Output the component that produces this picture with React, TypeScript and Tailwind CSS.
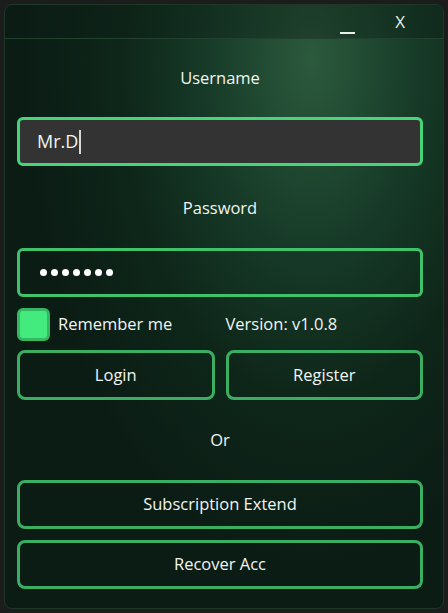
import { useState } from "react";

const font = { fontFamily: '"Open Sans", "Noto Sans", sans-serif' };

export default function App() {
  const [username, setUsername] = useState("Mr.D");
  const [remember, setRemember] = useState(true);

  return (
    <div className="w-[448px] h-[613px] bg-[#1b1d1c] p-1" style={font}>
      <div className="h-[605px] rounded-lg border border-[#1f3628] overflow-hidden bg-[radial-gradient(ellipse_at_70%_9%,#2c5a3d_0%,#173b28_24%,#0e2619_44%,#0b1c15_66%)] text-[#f1f5f2] text-[16.5px] flex flex-col">
        {/* Title bar */}
        <div className="h-[34px] shrink-0 border-b border-[#24402f] bg-[#0d1f16]/40 flex items-center justify-end pr-[38px]">
          <button className="w-[30px] h-[30px] flex items-end justify-center pb-[3px] mr-[33px]">
            <span className="block w-[15px] h-[1.5px] bg-[#e8efe9]" />
          </button>
          <button className="text-[17px] leading-none text-[#e8efe9]">X</button>
        </div>

        <div className="pl-[12px] pr-[20px] flex flex-col">
          <div className="text-center leading-[22px] mt-[28px]">Username</div>

          <div className="mt-[28px] h-[49px] rounded-md border-[3px] border-[#48d57a] bg-[#333333] flex items-center px-[17px]">
            <span className="text-[18px]">{username}</span>
            <span className="w-[2px] h-[24px] bg-[#d8d8d8] ml-[1px]" />
          </div>

          <div className="text-center leading-[22px] mt-[31px]">Password</div>

          <div className="mt-[29px] h-[49px] rounded-md border-[3px] border-[#3fc26c] flex items-center px-[20px]">
            <span className="flex gap-[4px]">
              {Array.from({ length: 7 }).map((_, i) => (
                <span key={i} className="block w-[7px] h-[7px] rounded-full bg-white" />
              ))}
            </span>
          </div>

          <div className="mt-[11px] h-[33px] grid grid-cols-2 gap-[11px] items-center">
            <div className="flex items-center">
              <button
                onClick={() => setRemember(!remember)}
                className={`w-[33px] h-[33px] rounded-md border-[3px] border-[#36b862] ${remember ? "bg-[#43ea7e]" : "bg-transparent"}`}
              />
              <span className="ml-[8px]">Remember me</span>
            </div>
            <span>Version: v1.0.8</span>
          </div>

          <div className="mt-[9px] grid grid-cols-2 gap-[11px]">
            <button className="h-[50px] rounded-lg border-[3px] border-[#3aae62]">Login</button>
            <button className="h-[50px] rounded-lg border-[3px] border-[#3aae62]">Register</button>
          </div>

          <div className="text-center leading-[22px] mt-[29px]">Or</div>

          <button className="mt-[29px] h-[49px] rounded-lg border-[3px] border-[#3aae62]">
            Subscription Extend
          </button>
          <button className="mt-[11px] h-[49px] rounded-lg border-[3px] border-[#3aae62]">
            Recover Acc
          </button>
        </div>
      </div>
      <input className="hidden" value={username} onChange={(e) => setUsername(e.target.value)} />
    </div>
  );
}
